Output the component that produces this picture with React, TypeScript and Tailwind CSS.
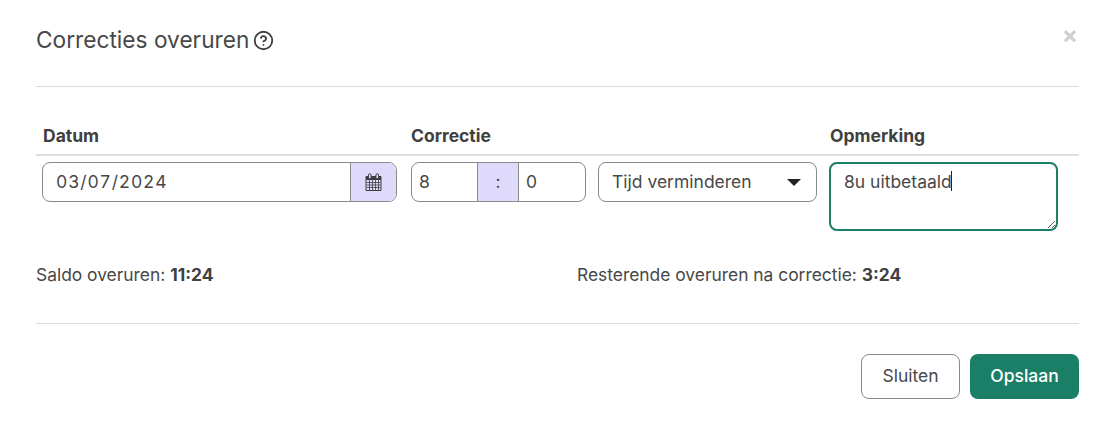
import React from 'react';
import { CircleHelp } from 'lucide-react';

const CalendarIcon = () => (
  <svg width="17" height="18" viewBox="0 0 17 18" className="text-[#3d3d3d]">
    <path d="M1.5 3h14a1 1 0 0 1 1 1v13a1 1 0 0 1-1 1h-14a1 1 0 0 1-1-1V4a1 1 0 0 1 1-1z" fill="currentColor" />
    <rect x="1.5" y="7" width="14" height="10" fill="#dfdafc" />
    <path d="M1.5 9.5h14M1.5 12h14M1.5 14.5h14M4.5 7v10M7.5 7v10M10.5 7v10M13.5 7v10" stroke="currentColor" strokeWidth="0.8" />
    <rect x="3.5" y="0.8" width="2.6" height="5" rx="1.3" fill="#dfdafc" stroke="currentColor" strokeWidth="1" />
    <rect x="10.9" y="0.8" width="2.6" height="5" rx="1.3" fill="#dfdafc" stroke="currentColor" strokeWidth="1" />
  </svg>
);

const labelClass = 'text-[17.5px] font-bold text-[#404040] leading-6';
const inputBorder = 'border border-[#8a8a8a] rounded-lg';

export default function App() {
  return (
    <div className="w-[1111px] h-[424px] bg-white text-[#484848] font-['Inter',sans-serif] pl-9 pr-8 overflow-hidden">
      {/* header */}
      <div className="h-[87px] border-b border-[#dcdcdc] flex items-start justify-between">
        <div className="flex items-center gap-[4px] mt-[25px] h-[30px]">
          <h1 className="text-[22.7px] font-normal leading-[30px] text-[#484848]">Correcties overuren</h1>
          <CircleHelp size={21} strokeWidth={2.1} className="mt-[1px] text-[#404040]" />
        </div>
        <button className="text-[24px] leading-none font-bold text-[#d0d0d0] mt-[23px] mr-[1px]">×</button>
      </div>

      {/* form table */}
      <div className="mt-[37px] h-[32px] border-b-2 border-[#dedede] flex">
        <div className={`w-[375px] pl-[7px] ${labelClass}`}>Datum</div>
        <div className={`w-[419px] ${labelClass}`}>Correctie</div>
        <div className={labelClass}>Opmerking</div>
      </div>
      <div className="flex items-start pt-[6px] pl-[6px]">
        <div className={`w-[355px] h-10 flex overflow-hidden ${inputBorder}`}>
          <div className="flex-1 pl-[13px] flex items-center text-[17.5px] tabular-nums tracking-[0.8px]">03/07/2024</div>
          <div className="w-[46px] bg-[#dfdafc] border-l border-[#8a8a8a] flex items-center justify-center">
            <CalendarIcon />
          </div>
        </div>
        <div className={`w-[175px] h-10 ml-[14px] flex overflow-hidden ${inputBorder}`}>
          <div className="w-[65px] pl-[7px] flex items-center text-[17.5px]">8</div>
          <div className="w-[42px] bg-[#dfdafc] border-x border-[#8a8a8a] flex items-center justify-center text-[17.5px]">:</div>
          <div className="flex-1 pl-[7px] flex items-center text-[17.5px]">0</div>
        </div>
        <div className={`w-[219px] h-10 ml-[12px] pl-[13px] pr-[15px] flex items-center justify-between text-[17.5px] ${inputBorder}`}>
          <span>Tijd verminderen</span>
          <span className="w-0 h-0 border-x-[7px] border-x-transparent border-t-[7px] border-t-[#222]" />
        </div>
        <div className="relative ml-[12px]">
          <textarea
            defaultValue="8u uitbetaald"
            className="block w-[229px] h-[69px] border-2 border-[#1b7f67] rounded-lg pl-[13px] pt-[6px] text-[17.5px] leading-6 text-[#484848] outline-none"
          />
          <span className="absolute left-[122px] top-[9px] w-px h-[20px] bg-[#222]" />
        </div>
      </div>

      {/* totals */}
      <div className="mt-[32px] flex text-[17.4px] leading-6">
        <div className="w-[541px]">
          Saldo overuren: <b className="text-[#404040]">11:24</b>
        </div>
        <div>
          Resterende overuren na correctie: <b className="text-[#404040]">3:24</b>
        </div>
      </div>

      <div className="mt-[36px] border-t border-[#dcdcdc]" />

      {/* footer */}
      <div className="mt-[30px] flex justify-end gap-[10px]">
        <button className="w-[99px] h-[45px] border border-[#8a8a8a] rounded-lg text-[17.5px] text-[#484848] bg-white">Sluiten</button>
        <button className="w-[109px] h-[45px] rounded-lg text-[17.5px] font-medium text-white bg-[#1b7f67]">Opslaan</button>
      </div>
    </div>
  );
}
